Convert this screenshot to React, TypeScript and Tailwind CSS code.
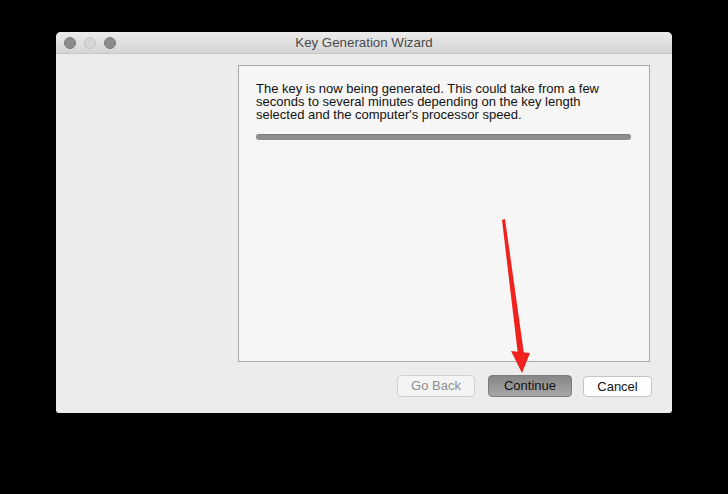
import React from 'react';

const font = { fontFamily: '"Liberation Sans", Arial, sans-serif' };

function TrafficLight({ light }: { light?: boolean }) {
  return (
    <div
      className={
        light
          ? 'w-[12px] h-[12px] rounded-full bg-[#d6d6d6] border border-[#c4c4c4]'
          : 'w-[12px] h-[12px] rounded-full bg-[#8c8c8c] border border-[#7a7a7a]'
      }
    />
  );
}

function Arrow() {
  return (
    <svg className="absolute left-0 top-0 pointer-events-none" width="728" height="494" viewBox="0 0 728 494">
      <polygon points="502,220 505,219 524,354 518,355" fill="#f0221d" />
      <polygon points="511,351 530,353 522,373" fill="#f0221d" />
    </svg>
  );
}

export default function App() {
  return (
    <div className="relative w-[728px] h-[494px] bg-black overflow-hidden" style={font}>
      <div className="ml-[56px] pt-[32px]">
        <div className="w-[616px] h-[381px] bg-[#ececec] rounded-t-[5px] rounded-b-[3px] overflow-hidden flex flex-col">
          <div className="relative h-[22px] flex items-center bg-gradient-to-b from-[#ebebeb] to-[#d5d5d5] border-b border-[#c8c8c8]">
            <div className="flex items-center gap-[8px] pl-[8px]">
              <TrafficLight />
              <TrafficLight light />
              <TrafficLight />
            </div>
            <div className="absolute inset-0 flex items-center justify-center text-[13.3px] text-[#4a4a4a]">
              Key Generation Wizard
            </div>
          </div>
          <div className="flex flex-1">
            <div className="w-[182px]" />
            <div className="flex-1 flex flex-col pt-[11px] pr-[22px]">
              <div className="h-[297px] bg-[#f6f6f6] border border-[#a9a9a9] pl-[17px] pr-[18px] pt-[16px]">
                <p className="text-[13px] leading-[13px] text-[#111]">
                  The key is now being generated. This could take from a few
                  <br />
                  seconds to several minutes depending on the key length
                  <br />
                  selected and the computer's processor speed.
                </p>
                <div className="mt-[13px] h-[6px] rounded-full bg-[#8e8e8e] border-t border-[#7d7d7d]" />
              </div>
              <div className="flex justify-end items-center mt-[13px]">
                <button className="w-[78px] h-[22px] rounded-[4px] bg-[#f4f4f4] border border-[#d0d0d0] text-[13px] text-[#8f8f8f]">
                  Go Back
                </button>
                <button className="ml-[13px] w-[84px] h-[22px] rounded-[4px] bg-gradient-to-b from-[#868686] to-[#a8a8a8] border border-[#7c7c7c] text-[13px] text-[#111]">
                  Continue
                </button>
                <button className="ml-[11px] w-[69px] h-[21px] mr-[-2px] rounded-[4px] bg-white border border-[#c4c4c4] text-[13px] text-[#111]">
                  Cancel
                </button>
              </div>
            </div>
          </div>
        </div>
      </div>
      <Arrow />
    </div>
  );
}
